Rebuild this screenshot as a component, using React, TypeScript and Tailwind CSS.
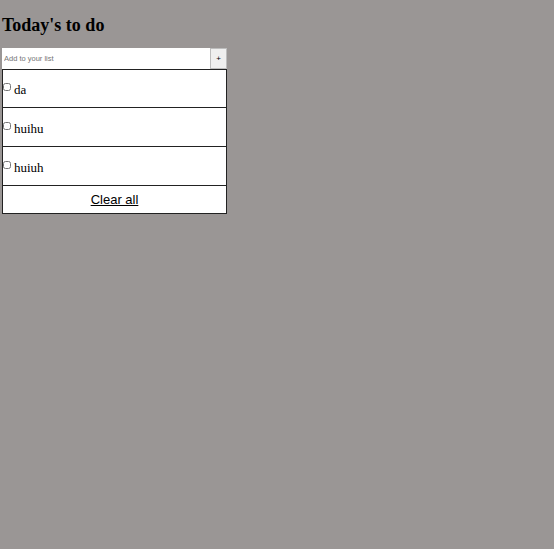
import { useState } from 'react';

export default function App() {
    const [items, setItems] = useState(['da', 'huihu', 'huiuh']);
    const [text, setText] = useState('');

    return (
        <div className="min-h-screen bg-[#9a9695] px-[2px] pt-[14px]" style={{ fontFamily: '"Liberation Serif", serif' }}>
            <h1 className="text-[18px] font-bold leading-[22px] text-black">Today's to do</h1>

            <div className="mt-[12px] w-[225px]">
                <div className="flex h-[21px]">
                    <input
                        value={text}
                        onChange={(e) => setText(e.target.value)}
                        placeholder="Add to your list"
                        className="w-[208px] bg-white px-[2px] text-[7.5px] text-black placeholder:text-[#757575] outline-none font-['Liberation_Sans',sans-serif]"
                    />
                    <button
                        onClick={() => { if (text) { setItems([...items, text]); setText(''); } }}
                        className="flex-1 border border-[#bdbdbd] bg-[#efefef] text-[8px] leading-none text-black font-['Liberation_Sans',sans-serif]"
                    >
                        +
                    </button>
                </div>

                <div className="border border-[#222] bg-white">
                    {items.map((item) => (
                        <div key={item} className="flex h-[39px] first:h-[38px] items-center border-b border-[#222] pt-[3px]">
                            <input type="checkbox" className="ml-0 mb-[6px] h-[8px] w-[8px]" />
                            <span className="ml-[3px] text-[13px] text-black">{item}</span>
                        </div>
                    ))}
                    <button
                        onClick={() => setItems([])}
                        className="flex h-[27px] w-full items-center justify-center text-[13px] text-black underline font-['Liberation_Sans',sans-serif]"
                    >
                        Clear all
                    </button>
                </div>
            </div>
        </div>
    );
}
